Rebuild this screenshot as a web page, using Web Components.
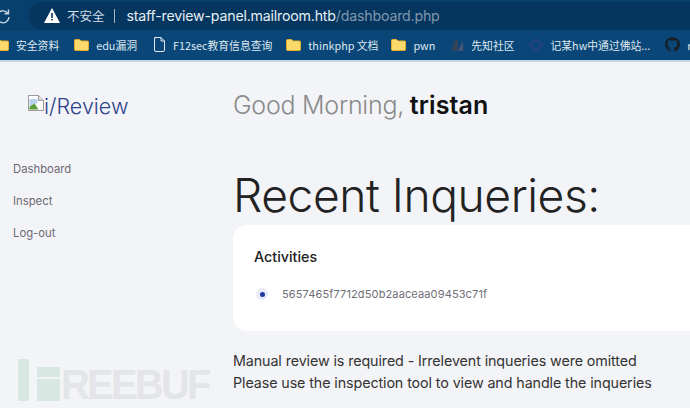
<!DOCTYPE html>
<html><head><meta charset="utf-8">
<style>
html,body{margin:0;padding:0;width:690px;height:408px;overflow:hidden;background:#f3f4f7;font-family:Inter,"Noto Sans CJK SC",sans-serif}
</style></head><body>
<template id="t-app"><style>
:host{display:flex;flex-direction:column;width:690px;height:408px;position:relative;overflow:hidden}
.body{flex:1;display:grid;grid-template-columns:233px 1fr;min-height:0}
</style><slot name="chrome"></slot><div class="body"><slot name="side"></slot><slot name="main"></slot></div><slot name="mark"></slot></template>

<template id="t-chrome"><style>
:host{display:block;height:62px;background:#0a4675;font-family:"Noto Sans CJK SC",sans-serif;color:#dfe8f0;box-sizing:border-box;border-bottom:2px solid #c4d5e4}
.top{height:31px;background:#073f6d;display:flex;align-items:center;position:relative}
.reload{margin-left:-5px;width:16px;height:16px;flex:none}
.pill{margin-left:18px;flex:1;height:28px;background:#05365f;border-radius:14px 0 0 14px;display:flex;align-items:center;padding-left:15px;font:13px "Liberation Sans",Inter,sans-serif;color:#e4ecf3;white-space:nowrap}
.warn{width:16px;height:15px;flex:none;margin-right:7px}
.ns{font:12.500px "Noto Sans CJK SC",sans-serif;color:#d5dfe8}
.sep{width:1px;height:14px;background:#a5b5c4;margin:0 12px 0 9px}
.url{font:14.200px Inter,sans-serif;letter-spacing:-.2px;color:#e6eef5}.url span{color:#7f97ac}
.marks{height:29px;display:flex;align-items:center;background:#0a4778;font-size:10.800px;white-space:nowrap;position:relative;margin-left:-6px;padding-bottom:2px;box-sizing:border-box}
.m{display:flex;align-items:center;gap:7px;flex:none}
.m svg{flex:none}
</style>
<div class="top"><svg class="reload" viewBox="0 0 16 16" fill="none" stroke="#c8d5e0" stroke-width="1.4"><path d="M13 5.500A6 6 0 1 0 14 9"/><path d="M13.500 1.500v4.200H9.500"/></svg>
<div class="pill"><svg class="warn" viewBox="0 0 16 15"><path d="M8 0 16 15H0Z" fill="#fff"/><path d="M7.200 5h1.600v5H7.200zM7.200 11h1.600v1.600H7.200z" fill="#05365f"/></svg><span class="ns">不安全</span><i class="sep"></i><span class="url">staff-review-panel.mailroom.htb<span>/dashboard.php</span></span></div></div>
<div class="marks" id="marks"></div></template>

<template id="t-side"><style>
:host{display:block;padding-top:34px;font-family:Inter,sans-serif}
.logo{margin-left:28px;height:22px;display:flex;align-items:flex-end;color:#2d438b;font-size:21.500px;font-weight:300;line-height:24px;white-space:nowrap}
.logo svg{width:16px;height:16px;margin-bottom:7px;flex:none}
nav{margin-top:42px;padding-left:13px;display:flex;flex-direction:column;gap:14px}
</style><div class="logo"><svg viewBox="0 0 16 16"><path d="M.5.5h10l5 5v10H.5z" fill="#fff" stroke="#9a9a9a"/><path d="M10.500.5v5h5" fill="#ddd" stroke="#9a9a9a"/><path d="M1.500 4h8v4l-8 3z" fill="#bcd0ef"/><path d="M1.500 14.500v-3l5-3 4 6z" fill="#5c9e3a"/></svg><span>i/Review</span></div><nav><slot></slot></nav></template>

<template id="t-link"><style>
:host{display:block;font-size:11.300px;line-height:18px;color:#6d6a75;font-weight:400}
</style><slot></slot></template>

<template id="t-main"><style>
:host{display:block;padding-top:27px;font-family:Inter,sans-serif;overflow:hidden}
.hi{font-size:25px;line-height:32px;color:#8a8a8a;font-weight:300;letter-spacing:-.25px;white-space:nowrap}
.hi b{color:#111;font-weight:600;margin-left:-1px;letter-spacing:.1px}
h1{margin:45px 0 0;font-size:46.200px;line-height:58px;font-weight:300;color:#222;letter-spacing:-.45px;white-space:nowrap}
.foot{margin-top:19px;font-size:14.300px;line-height:22px;color:#333;white-space:nowrap;letter-spacing:-.1px}
</style><div class="hi">Good Morning, <b>tristan</b></div><h1>Recent Inqueries:</h1><slot></slot><div class="foot">Manual review is required - Irrelevent inqueries were omitted<br>Please use the inspection tool to view and handle the inqueries</div></template>

<template id="t-card"><style>
:host{display:block;margin-top:1px;width:480px;height:106px;box-sizing:border-box;background:#fff;border-radius:14px;padding:22px 21px 0}
h2{margin:0;font-size:14.300px;line-height:20px;font-weight:500;color:#222}
.row{margin-top:17px;display:flex;align-items:center;height:20px;padding-left:2px}
.dot{width:12px;height:12px;border-radius:50%;background:#e9ebf8;display:flex;align-items:center;justify-content:center;margin-right:14px;flex:none}
.dot i{width:5px;height:5px;border-radius:50%;background:#2138a8}
.t{font-size:11px;color:#6f6d78;letter-spacing:.13px;white-space:nowrap}
</style><h2>Activities</h2><div class="row"><span class="dot"><i></i></span><span class="t"><slot></slot></span></div></template>

<template id="t-mark"><style>
:host{position:absolute;left:18px;top:359px;width:200px;height:42px;display:flex;align-items:flex-end;pointer-events:none}
.l{width:11px;height:42px;background:#d7e7e2;flex:none}
.f{width:23px;height:34px;margin-left:8px;flex:none;display:flex;flex-direction:column;gap:2px}
.f i{display:block;background:#d7e7e2}.f i:first-child{height:10px}.f i:last-child{flex:1}
.w{font:bold 43px/34px "Liberation Sans",sans-serif;height:32px;color:#e3e5e8;margin-left:1px;letter-spacing:-3px;margin-bottom:2px;transform:scaleX(.93);transform-origin:left center;white-space:nowrap}
</style><div class="l"></div><div class="f"><i></i><i></i></div><div class="w">REEBUF</div></template>

<script>
function reg(name,tid,init){customElements.define(name,class extends HTMLElement{constructor(){super();const s=this.attachShadow({mode:'open'});s.appendChild(document.getElementById(tid).content.cloneNode(true));if(init)init(s)}})}
const folder='<svg width="15" height="13" viewBox="0 0 15 13"><path d="M.5 2.500a1 1 0 0 1 1-1h4l1.500 1.500h6.500a1 1 0 0 1 1 1v7.500a1 1 0 0 1-1 1h-12a1 1 0 0 1-1-1z" fill="#fbd96b" stroke="#e2ae2c"/></svg>';
const page='<svg width="13" height="15" viewBox="0 0 13 15" fill="none" stroke="#e3eaf1"><path d="M1.500.5h6.500l3.500 3.500v9a1.500 1.500 0 0 1-1.500 1.500h-7a1.500 1.500 0 0 1-1.500-1.500v-11a1.500 1.500 0 0 1 1.500-1.500zM8 .5v3.500h3.500"/></svg>';
const xz='<svg width="14" height="14" viewBox="0 0 14 14"><path d="M1 13 5 2h3v11z" fill="#33455c"/><path d="M8 13 13 3v10z" fill="#4a5570"/></svg>';
const dia='<svg width="14" height="14" viewBox="0 0 14 14" fill="none" stroke="#3b3f86" stroke-width="1.200"><path d="M7 1l6 6-6 6-6-6z"/></svg>';
const gh='<svg width="15" height="15" viewBox="0 0 16 16"><path fill="#16202b" d="M8 0a8 8 0 0 0-2.500 15.600c.4.1.5-.2.5-.4v-1.400c-2.200.5-2.700-1-2.700-1-.4-.9-.9-1.200-.9-1.200-.7-.5.1-.5.1-.5.8.1 1.200.8 1.200.8.7 1.200 1.900.9 2.300.7.1-.5.300-.9.500-1.100-1.800-.2-3.700-.9-3.700-4 0-.9.300-1.600.8-2.100-.1-.2-.4-1 .1-2.100 0 0 .7-.2 2.200.8a7.600 7.600 0 0 1 4 0c1.500-1 2.200-.8 2.200-.8.400 1.100.2 1.900.1 2.100.5.600.8 1.300.8 2.100 0 3.100-1.900 3.700-3.700 4 .3.300.6.800.6 1.500v2.200c0 .2.100.5.600.4A8 8 0 0 0 8 0z"/></svg>';
const items=[[folder,'安全资料',0],[folder,'edu漏洞',15],[page,'F12sec教育信息查询',16],[folder,'thinkphp 文档',14],[folder,'pwn',13],[xz,'先知社区',15],[dia,'记某hw中通过佛站...',15],[gh,'r',15]];
reg('app-shell','t-app');
reg('browser-chrome','t-chrome',s=>{const b=s.getElementById('marks');items.forEach(([i,t,g])=>{const d=document.createElement('div');d.className='m';d.style.marginLeft=g+'px';d.innerHTML=i+'<span>'+t+'</span>';b.appendChild(d)})});
reg('side-bar','t-side');reg('nav-link','t-link');reg('main-panel','t-main');reg('activity-card','t-card');reg('water-mark','t-mark');
</script>
<app-shell>
<browser-chrome slot="chrome"></browser-chrome>
<side-bar slot="side"><nav-link>Dashboard</nav-link><nav-link>Inspect</nav-link><nav-link>Log-out</nav-link></side-bar>
<main-panel slot="main"><activity-card>5657465f7712d50b2aaceaa09453c71f</activity-card></main-panel>
<water-mark slot="mark"></water-mark>
</app-shell>
</body></html>
